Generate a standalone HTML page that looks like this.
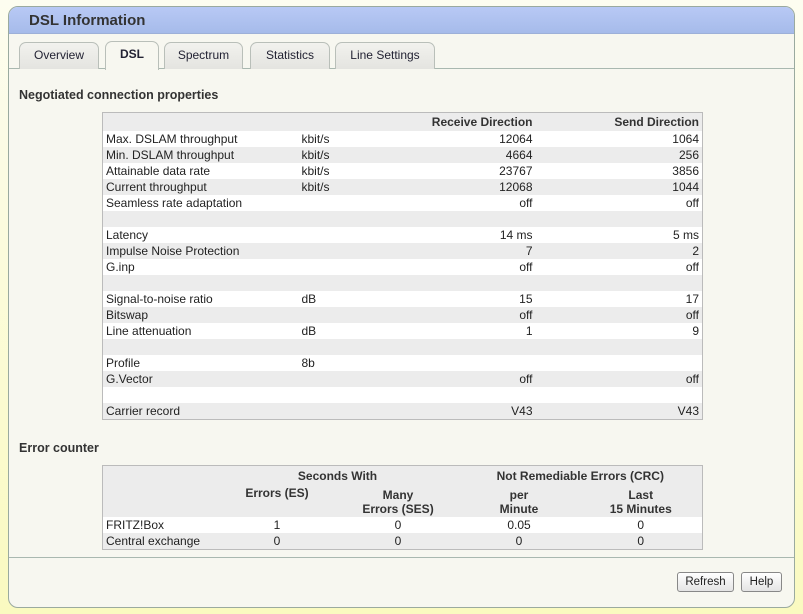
<!DOCTYPE html>
<html><head><style>
body{margin:0;width:803px;height:614px;background:linear-gradient(#fdfdf0,#fafac0);font-family:"Liberation Sans",sans-serif;font-size:12px;color:#222;position:relative;overflow:hidden}
.panel{position:absolute;left:8px;top:6px;width:785px;height:600px;border:1px solid #9aaa9f;border-radius:10px;background:#f7f7f0;overflow:hidden}
.hdr{height:26px;background:linear-gradient(#b8c9f5,#a6bbea);border-bottom:1px solid #9db0d8}
.hdr span{position:absolute;left:20px;top:5px;font-size:15px;font-weight:bold;color:#333}
.tabline{position:absolute;left:0;top:61px;width:785px;border-top:1px solid #a9b8b0}
.tab{position:absolute;top:35px;height:26px;border:1px solid #b9bfb9;border-bottom:none;border-radius:7px 7px 0 0;background:linear-gradient(#f2f2ee,#e4e4e0);text-align:center;line-height:24px;font-size:12px;color:#223}
.tab.act{background:#f7f7f0;height:28px;top:34px;font-weight:bold}
h3{position:absolute;margin:0;font-size:12.5px;font-weight:bold;color:#333}
table{position:absolute;border-collapse:collapse;border:1px solid #bbb;font-size:12px;table-layout:fixed}
td{padding:0 3px;height:16px;line-height:16px;white-space:nowrap;overflow:hidden}
tr:nth-child(even) td{background:#fff}
tr:nth-child(odd) td{background:#ececec}
.r{text-align:right}.c{text-align:center}
th{font-weight:bold;color:#333;background:#ececec;padding:0 3px}
.btn{position:absolute;top:565px;height:18px;border:1px solid #888;border-radius:3px;background:linear-gradient(#fff,#e4e4e4);font-size:11.5px;line-height:18px;text-align:center}
</style></head><body>
<div class="panel">
<div class="hdr"><span>DSL Information</span></div>
<div class="tabline"></div>
<div class="tab" style="left:10px;width:78px">Overview</div>
<div class="tab act" style="left:96px;width:52px">DSL</div>
<div class="tab" style="left:155px;width:77px">Spectrum</div>
<div class="tab" style="left:241px;width:78px">Statistics</div>
<div class="tab" style="left:326px;width:98px">Line Settings</div>
<h3 style="left:10px;top:81px">Negotiated connection properties</h3>
<table style="left:93px;top:105px;width:600px">
<colgroup><col style="width:196px"><col style="width:70px"><col style="width:167px"><col style="width:167px"></colgroup>
<tr><th style="height:18px"></th><th></th><th style="text-align:right">Receive Direction</th><th style="text-align:right">Send Direction</th></tr>
<tr><td>Max. DSLAM throughput</td><td>kbit/s</td><td class="r">12064</td><td class="r">1064</td></tr>
<tr><td>Min. DSLAM throughput</td><td>kbit/s</td><td class="r">4664</td><td class="r">256</td></tr>
<tr><td>Attainable data rate</td><td>kbit/s</td><td class="r">23767</td><td class="r">3856</td></tr>
<tr><td>Current throughput</td><td>kbit/s</td><td class="r">12068</td><td class="r">1044</td></tr>
<tr><td>Seamless rate adaptation</td><td></td><td class="r">off</td><td class="r">off</td></tr>
<tr><td></td><td></td><td></td><td></td></tr>
<tr><td>Latency</td><td></td><td class="r">14 ms</td><td class="r">5 ms</td></tr>
<tr><td>Impulse Noise Protection</td><td></td><td class="r">7</td><td class="r">2</td></tr>
<tr><td>G.inp</td><td></td><td class="r">off</td><td class="r">off</td></tr>
<tr><td></td><td></td><td></td><td></td></tr>
<tr><td>Signal-to-noise ratio</td><td>dB</td><td class="r">15</td><td class="r">17</td></tr>
<tr><td>Bitswap</td><td></td><td class="r">off</td><td class="r">off</td></tr>
<tr><td>Line attenuation</td><td>dB</td><td class="r">1</td><td class="r">9</td></tr>
<tr><td></td><td></td><td></td><td></td></tr>
<tr><td>Profile</td><td>8b</td><td></td><td></td></tr>
<tr><td>G.Vector</td><td></td><td class="r">off</td><td class="r">off</td></tr>
<tr><td></td><td></td><td></td><td></td></tr>
<tr><td>Carrier record</td><td></td><td class="r">V43</td><td class="r">V43</td></tr>
</table>
<h3 style="left:10px;top:434px">Error counter</h3>
<table style="left:93px;top:458px;width:600px">
<colgroup><col style="width:114px"><col style="width:121px"><col style="width:121px"><col style="width:121px"><col style="width:123px"></colgroup>
<tr><th style="height:20px"></th><th colspan="2" class="c">Seconds With</th><th colspan="2" class="c">Not Remediable Errors (CRC)</th></tr>
<tr><th style="height:31px"></th><th style="vertical-align:top">Errors (ES)</th><th>Many<br>Errors (SES)</th><th>per<br>Minute</th><th>Last<br>15 Minutes</th></tr>
<tr><td style="background:#fff">FRITZ!Box</td><td class="c" style="background:#fff">1</td><td class="c" style="background:#fff">0</td><td class="c" style="background:#fff">0.05</td><td class="c" style="background:#fff">0</td></tr>
<tr><td style="background:#ececec">Central exchange</td><td class="c" style="background:#ececec">0</td><td class="c" style="background:#ececec">0</td><td class="c" style="background:#ececec">0</td><td class="c" style="background:#ececec">0</td></tr>
</table>
<div style="position:absolute;left:0;top:550px;width:785px;border-top:1px solid #a9b8b0"></div>
<div class="btn" style="left:668px;width:55px">Refresh</div>
<div class="btn" style="left:732px;width:39px">Help</div>
</div>
</body></html>
